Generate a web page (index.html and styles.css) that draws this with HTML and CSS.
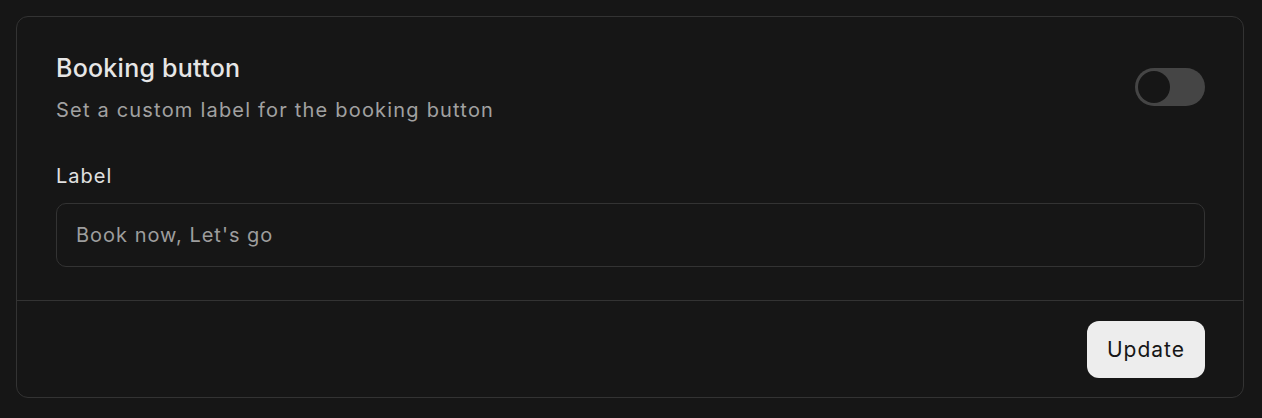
FILE: index.html
```html
<!DOCTYPE html>
<html lang="en">
<head>
<meta charset="utf-8">
<title>Booking button</title>
<link rel="stylesheet" href="styles.css">
</head>
<body>
<section class="card">
  <div class="card-body">
    <div class="header">
      <div class="header-text">
        <h2 class="title">Booking button</h2>
        <p class="subtitle">Set a custom label for the booking button</p>
      </div>
      <button class="toggle" type="button" aria-pressed="false"><span class="thumb"></span></button>
    </div>
    <label class="field-label" for="label-input">Label</label>
    <input id="label-input" class="input" type="text" placeholder="Book now, Let's go">
  </div>
  <div class="card-footer">
    <button class="btn" type="button">Update</button>
  </div>
</section>
</body>
</html>
```

FILE: styles.css
```css
* { box-sizing: border-box; }
html, body { background: #161616; }
body {
  margin: 0;
  padding: 16px 18px 20px 16px;
  font-family: Inter, "Noto Sans", sans-serif;
}
.card {
  border: 1px solid #333333;
  border-radius: 12px;
  background: #161616;
  height: 382px;
  display: flex;
  flex-direction: column;
}
.card-body {
  padding: 35px 38px 33px 39px;
  display: flex;
  flex-direction: column;
  border-bottom: 1px solid #333333;
}
.header {
  display: flex;
  align-items: center;
  justify-content: space-between;
}
.title {
  margin: 0;
  font-size: 25px;
  line-height: 32px;
  font-weight: 500;
  color: #e6e6e6;
  letter-spacing: 0.25px;
}
.subtitle {
  margin: 12px 0 0;
  font-size: 20px;
  line-height: 28px;
  color: #a1a1a1;
  letter-spacing: 1.2px;
}
.toggle {
  width: 70px;
  height: 38px;
  border: none;
  border-radius: 19px;
  background: #454545;
  padding: 3px;
  display: flex;
  align-items: center;
  margin-top: -3px;
}
.thumb {
  width: 32px;
  height: 32px;
  border-radius: 50%;
  background: #161616;
}
.field-label {
  margin-top: 38px;
  font-size: 20px;
  line-height: 28px;
  color: #e0e0e0;
  letter-spacing: 1px;
}
.input {
  margin-top: 13px;
  height: 64px;
  border: 1px solid #333333;
  border-radius: 10px;
  background: #161616;
  padding: 0 19px;
  font-family: inherit;
  font-size: 20px;
  color: #e0e0e0;
  outline: none;
  letter-spacing: 1px;
}
.input::placeholder { color: #9d9d9d; }
.card-footer {
  flex: 1;
  display: flex;
  justify-content: flex-end;
  align-items: flex-start;
  padding: 20px 38px 0 0;
}
.btn {
  width: 118px;
  height: 57px;
  border: none;
  border-radius: 12px;
  background: #ededed;
  color: #161616;
  font-family: inherit;
  font-size: 21px;
  letter-spacing: 1px;
  padding: 0;
}
```
